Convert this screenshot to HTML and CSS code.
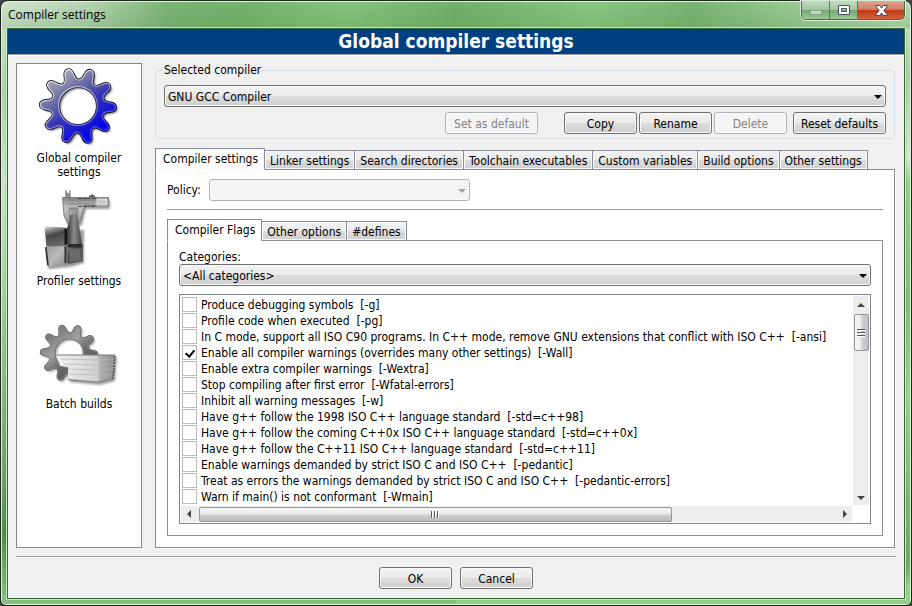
FILE: index.html
```html
<!DOCTYPE html>
<html lang="en">
<head>
<meta charset="utf-8">
<title>Compiler settings</title>
<link rel="stylesheet" href="styles.css">
</head>
<body>
<div class="window">
  <header class="titlebar">
    <h1 class="titlebar-text">Compiler settings</h1>
    <div class="caption-buttons">
      <button class="caption caption-min" aria-label="Minimize" disabled>
        <svg width="12" height="5" viewBox="0 0 12 5"><rect x=".5" y=".5" width="11" height="4" fill="#c5dcc2" stroke="#86a184"/></svg>
      </button>
      <button class="caption caption-max" aria-label="Maximize">
        <svg width="12" height="10" viewBox="0 0 12 10"><path fill-rule="evenodd" d="M.5.5h11v9H.5zM3.500 3.500h5v3h-5z" fill="#fff" stroke="#4b4f63"/></svg>
      </button>
      <button class="caption caption-close" aria-label="Close">
        <svg width="13" height="11" viewBox="0 0 13 11"><path d="M1 .5h3.500L6.500 3l2-2.500H12v1L9 5.500l3 4v1H8.500l-2-2.500-2 2.500H1v-1l3-4-3-4z" fill="#fff" stroke="#4b3c4e"/></svg>
      </button>
    </div>
  </header>

  <main class="client">
    <h2 class="banner">Global compiler settings</h2>

    <div class="content">
      <nav class="sidebar" aria-label="Pages">
        <button class="page">
          <svg class="page-icon" viewBox="0 0 84 84" aria-hidden="true">
            <defs>
              <path id="gear" fill-rule="evenodd" d="M25.800-7.300Q26.700-4.200 32.800-3.300Q38.900-2.400 38.800 1.400Q38.700 5.100 32.500 5.600Q26.300 6.100 25.200 9.200Q24.100 12.300 28.500 16.600Q32.900 21 30.600 23.900Q28.300 26.800 23 23.600Q17.700 20.400 15 22.300Q12.300 24.100 13.300 30.200Q14.300 36.300 10.700 37.300Q7.100 38.300 4.800 32.600Q2.400 26.900-.9 26.800Q-4.200 26.700-7 32.300Q-9.800 37.800-13.300 36.500Q-16.800 35.200-15.400 29.200Q-13.900 23.100-16.500 21.100Q-19.100 19.100-24.600 22Q-30.100 24.800-32.200 21.700Q-34.300 18.600-29.600 14.600Q-24.900 10.500-25.800 7.300Q-26.700 4.200-32.800 3.300Q-38.900 2.400-38.800-1.400Q-38.700-5.100-32.500-5.600Q-26.300-6.100-25.200-9.200Q-24.100-12.300-28.500-16.600Q-32.900-21-30.600-23.900Q-28.300-26.800-23-23.600Q-17.700-20.400-15-22.300Q-12.300-24.100-13.300-30.200Q-14.300-36.300-10.700-37.300Q-7.100-38.300-4.800-32.600Q-2.400-26.900.9-26.800Q4.200-26.700 7-32.300Q9.800-37.800 13.300-36.500Q16.800-35.200 15.400-29.200Q13.900-23.100 16.500-21.100Q19.100-19.100 24.600-22Q30.100-24.800 32.200-21.700Q34.300-18.600 29.600-14.600Q24.900-10.500 25.800-7.300ZM20 0A20 20 0 1 0-20 0A20 20 0 1 0 20 0Z"/>
              <linearGradient id="blue" gradientUnits="userSpaceOnUse" x1="-22" y1="-30" x2="14" y2="26">
                <stop offset="0" stop-color="#a3a3b4"/><stop offset=".3" stop-color="#6d6da6"/><stop offset=".6" stop-color="#3434b4"/><stop offset="1" stop-color="#0808e4"/>
              </linearGradient>
              <linearGradient id="rim" gradientUnits="userSpaceOnUse" x1="-22" y1="-30" x2="22" y2="30">
                <stop offset="0" stop-color="#f2f2f4"/><stop offset=".5" stop-color="#9a9ad8"/><stop offset="1" stop-color="#3c3cf2"/>
              </linearGradient>
              <linearGradient id="steel" gradientUnits="userSpaceOnUse" x1="-22" y1="-30" x2="22" y2="30">
                <stop offset="0" stop-color="#767676"/><stop offset=".35" stop-color="#a0a0a0"/><stop offset=".6" stop-color="#6c6c6c"/><stop offset="1" stop-color="#515151"/>
              </linearGradient>
              <filter id="soft" x="-20%" y="-20%" width="140%" height="140%"><feGaussianBlur stdDeviation="1.300"/></filter>
            </defs>
            <use href="#gear" transform="translate(43 41) scale(.97)" fill="#000" opacity=".6" filter="url(#soft)"/>
            <g transform="translate(41 39) scale(.97)">
              <use href="#gear" fill="none" stroke="#16161c" stroke-width="3"/>
              <use href="#gear" fill="url(#blue)" stroke="url(#rim)" stroke-width="1.200"/>
            </g>
          </svg>
          <span>Global compiler settings</span>
        </button>

        <button class="page">
          <svg class="page-icon" viewBox="0 0 84 84" aria-hidden="true">
            <defs>
              <linearGradient id="cube-a" x1="0" y1="0" x2=".3" y2="1"><stop offset="0" stop-color="#e4e4e4"/><stop offset=".25" stop-color="#8a8a8a"/><stop offset=".5" stop-color="#484848"/><stop offset="1" stop-color="#666"/></linearGradient>
              <linearGradient id="cube-b" x1="0" y1="0" x2="1" y2="1"><stop offset="0" stop-color="#989898"/><stop offset=".5" stop-color="#bababa"/><stop offset="1" stop-color="#8c8c8c"/></linearGradient>
              <linearGradient id="cube-c" x1="0" y1="0" x2="1" y2="1"><stop offset="0" stop-color="#8a8a8a"/><stop offset=".35" stop-color="#4c4c4c"/><stop offset="1" stop-color="#666"/></linearGradient>
              <linearGradient id="cone"><stop offset="0" stop-color="#2a2a2a"/><stop offset=".5" stop-color="#8a8a8a"/><stop offset="1" stop-color="#444"/></linearGradient>
              <linearGradient id="bar" x1="0" y1="0" x2="0" y2="1"><stop offset="0" stop-color="#858585"/><stop offset=".4" stop-color="#c4c4c4"/><stop offset="1" stop-color="#8a8a8a"/></linearGradient>
            </defs>
            <g transform="translate(2 -2)">
              <path d="M8 42h37v33l-14 4-22 2zM26 12h45v9H47l-4 16-6 3z" fill="#000" opacity=".4" filter="url(#soft)"/>
              <path d="M26.500 2l2 3 1.500 1 1-4 .5 9h-5z" fill="#909090" stroke="#777" stroke-width=".5"/>
              <path d="M50 9.500v-2h2v-1h2v1h2v2z" fill="#555"/>
              <path d="M23.500 9.500h46v8h-24l-3.500 13-4 6.500-2-1 2-9 1-7h-9l.5 8 2 8-3 1-4.500-9z" fill="url(#bar)" stroke="#707070" stroke-width=".8"/>
              <path d="M29 12h26M29 16h26" stroke="#777" stroke-width=".7"/>
              <path d="M39 10.500h12M53 10.500h5M39 18.500h11M52 18.500h4" stroke="#444" stroke-width="1.200" stroke-dasharray="4 1"/>
              <path d="M58 11h10v6H58z" fill="#c9c9c9" stroke="#eee" stroke-width=".8"/>
              <path d="M31 27q3-2 7 0l1.500 7L43 56H27V42l3-7z" fill="url(#cone)"/>
              <path d="M5.500 40l2-1.500 18 1 1.500 1-1.500 17-18 1z" fill="url(#cube-a)"/>
              <path d="M25.500 40l2.500 1v15.500l-2.500 1z" fill="#151515"/>
              <path d="M7 59l18.500-.5 1 17-17.500 3z" fill="url(#cube-b)"/>
              <path d="M6 59.500l1.500-1L10 78l-2-1zM25.500 58.500h2v16l-2 1z" fill="#303030"/>
              <path d="M28 58l2-1.500 12.500 1 1.500 1.500v14.500L28.500 76z" fill="url(#cube-c)"/>
              <path d="M27.500 58l2-2H43l1 2-2 1.500H30z" fill="#2c2c2c"/>
              <path d="M30.500 61l10.500-.5v11.500l-10 2z" fill="#6a6a6a"/>
            </g>
          </svg>
          <span>Profiler settings</span>
        </button>

        <button class="page">
          <svg class="page-icon" viewBox="0 0 84 84" aria-hidden="true">
            <defs>
              <linearGradient id="paper"><stop offset="0" stop-color="#f2f2f2"/><stop offset=".7" stop-color="#cfcfcf"/><stop offset=".74" stop-color="#b0b0b0"/><stop offset="1" stop-color="#8c8c8c"/></linearGradient>
            </defs>
            <g filter="url(#soft)" opacity=".4">
              <use href="#gear" transform="translate(34 42) scale(.73)"/>
              <path d="M24 44h56l-2 24-15 4-30-3z"/>
            </g>
            <g transform="translate(32 40) scale(.73)">
              <use href="#gear" fill="none" stroke="#4c4c4c" stroke-width="2.500"/>
              <use href="#gear" fill="url(#steel)" stroke="#999" stroke-width="1"/>
            </g>
            <path d="M20 42h58l-2 24-15 3L31 66.500V54l-8-1z" fill="url(#paper)"/>
            <path d="M20 42h58" stroke="#7a7a7a"/>
            <path d="M24 46l37 1 16-1M27 51l34 1 16-1M31 56l30 1 15-1M31 61l30 1 15-1" fill="none" stroke="#b4b4b4" stroke-width=".7"/>
            <path d="M31 66.500L61 69l15-3" fill="none" stroke="#777" stroke-width=".8"/>
            <path d="M78 43L76 66" stroke="#555" stroke-width="1.500" stroke-dasharray="2 1"/>
          </svg>
          <span>Batch builds</span>
        </button>
      </nav>

      <div class="main">
        <fieldset class="group">
          <legend>Selected compiler</legend>
          <div class="combo">
            <select aria-label="Selected compiler"><option>GNU GCC Compiler</option></select>
          </div>
          <div class="group-buttons">
            <button class="btn wide push" disabled>Set as default</button>
            <button class="btn">Copy</button>
            <button class="btn">Rename</button>
            <button class="btn" disabled>Delete</button>
            <button class="btn wide reset">Reset defaults</button>
          </div>
        </fieldset>

        <div class="notebook">
          <div class="tabs" role="tablist">
            <button class="tab active" role="tab" aria-selected="true">Compiler settings</button>
            <button class="tab" role="tab">Linker settings</button>
            <button class="tab" role="tab">Search directories</button>
            <button class="tab" role="tab">Toolchain executables</button>
            <button class="tab" role="tab">Custom variables</button>
            <button class="tab" role="tab">Build options</button>
            <button class="tab" role="tab">Other settings</button>
          </div>
          <section class="panel">
            <div class="policy">
              <label for="policy">Policy:</label>
              <div class="combo combo-policy">
                <select id="policy" disabled></select>
              </div>
            </div>
            <hr class="rule">

            <div class="notebook inner">
              <div class="tabs" role="tablist">
                <button class="tab active" role="tab" aria-selected="true">Compiler Flags</button>
                <button class="tab" role="tab">Other options</button>
                <button class="tab" role="tab">#defines</button>
              </div>
              <section class="panel">
                <label class="categories" for="categories">Categories:</label>
                <div class="combo">
                  <select id="categories"><option>&lt;All categories&gt;</option></select>
                </div>
                <div class="flags">
                  <div class="flag-list">
                    <label><input type="checkbox">Produce debugging symbols  [-g]</label>
                    <label><input type="checkbox">Profile code when executed  [-pg]</label>
                    <label><input type="checkbox">In C mode, support all ISO C90 programs. In C++ mode, remove GNU extensions that conflict with ISO C++  [-ansi]</label>
                    <label><input type="checkbox" checked>Enable all compiler warnings (overrides many other settings)  [-Wall]</label>
                    <label><input type="checkbox">Enable extra compiler warnings  [-Wextra]</label>
                    <label><input type="checkbox">Stop compiling after first error  [-Wfatal-errors]</label>
                    <label><input type="checkbox">Inhibit all warning messages  [-w]</label>
                    <label><input type="checkbox">Have g++ follow the 1998 ISO C++ language standard  [-std=c++98]</label>
                    <label><input type="checkbox">Have g++ follow the coming C++0x ISO C++ language standard  [-std=c++0x]</label>
                    <label><input type="checkbox">Have g++ follow the C++11 ISO C++ language standard  [-std=c++11]</label>
                    <label><input type="checkbox">Enable warnings demanded by strict ISO C and ISO C++  [-pedantic]</label>
                    <label><input type="checkbox">Treat as errors the warnings demanded by strict ISO C and ISO C++  [-pedantic-errors]</label>
                    <label><input type="checkbox">Warn if main() is not conformant  [-Wmain]</label>
                  </div>
                  <div class="vbar" aria-hidden="true">
                    <i class="arrow up"></i>
                    <div class="vthumb"><i></i><i></i><i></i></div>
                    <i class="arrow down"></i>
                  </div>
                  <div class="hbar" aria-hidden="true">
                    <i class="arrow left"></i>
                    <div class="htrack"><div class="hthumb"><i></i><i></i><i></i></div></div>
                    <i class="arrow right"></i>
                  </div>
                </div>
              </section>
            </div>
          </section>
        </div>
      </div>
    </div>

    <footer class="footer">
      <button class="btn">OK</button>
      <button class="btn">Cancel</button>
    </footer>
  </main>
</div>
</body>
</html>
```
FILE: styles.css
```css
* {
  box-sizing: border-box;
}

body {
  margin: 0;
  background: #444;
  color: #000;
  font: 12px/14px "DejaVu Sans Condensed", "DejaVu Sans", sans-serif;
}

button,
select,
input {
  margin: 0;
  font: inherit;
  color: inherit;
}

.window {
  display: flex;
  flex-direction: column;
  height: 100vh;
  padding: 0 6px 6px;
  border: 1px solid #1c241c;
  border-radius: 8px 8px 6px 6px;
  background:
    linear-gradient(transparent, rgb(80 140 75 / 25%)) top / 100% 28px no-repeat,
    linear-gradient(90deg, #d5e6d2, #b5d4b1 10%, #7db577 18%, #74b26d 26%, #86c47f 38%, #73b06c 50%, #8bc884 65%, #7ab474 76%, #9ccd96 88%, #b5dab0) top / 100% 28px no-repeat,
    linear-gradient(#d2e6cf, #a9d1a4 15%, #c8e4c4 30%, #a6d49f 45%, #6b9d66 80%, #4f8a49 88%, #86c77e) left / 50% 100% no-repeat,
    linear-gradient(#cfe8ca, #a2cf9c 12%, #cfe8ca 26%, #8fd185 30%, #7dbf74 50%, #92d488 65%, #6ba763 93%, #8fd185 97%) right / 50% 100% no-repeat;
  box-shadow: inset 0 0 0 1px #e4f3e2;
}

.titlebar {
  display: flex;
  justify-content: space-between;
  height: 27px;
}

.titlebar-text {
  margin: 0;
  padding: 5px 1px;
  font: 12px/18px "Open Sans", "Noto Sans", sans-serif;
}

.caption-buttons {
  display: flex;
  height: 19px;
  border: 1px solid #4e6b4c;
  border-top: 0;
  border-radius: 0 0 5px 5px;
  box-shadow: 0 0 0 1px #d7ecd4;
  overflow: hidden;
}

.caption {
  display: flex;
  align-items: center;
  justify-content: center;
  width: 28px;
  padding: 0;
  border: 0;
  border-right: 1px solid #5b7559;
  background: linear-gradient(#c3dcc0, #a3c69f 48%, #78a873 52%, #9ac795);
}

.caption-min {
  align-items: flex-end;
  padding-bottom: 4px;
}

.caption-close {
  width: 46px;
  border-right: 0;
  background: linear-gradient(#e2a795, #cf7a62 48%, #bb3a17 52%, #d4623e);
}

.client {
  display: flex;
  flex: 1;
  flex-direction: column;
  min-height: 0;
  border: 1px solid #3d6339;
  outline: 1px solid #c6e5c2;
  background: #f0f0f0;
}

.banner {
  margin: 0;
  border-bottom: 1px solid #a0a0a0;
  background: #004080;
  box-shadow: 0 1px #fff;
  color: #fff;
  font-size: 19px;
  font-weight: bold;
  line-height: 25px;
  text-align: center;
}

.content {
  display: flex;
  flex: 1;
  gap: 13px;
  min-height: 0;
  padding: 8px 9px 0 8px;
}

.sidebar {
  display: flex;
  flex: none;
  flex-direction: column;
  gap: 11px;
  width: 126px;
  padding-top: 3px;
  border: 1px solid #828790;
  background: #fff;
}

.page {
  display: flex;
  flex-direction: column;
  align-items: center;
  min-height: 112px;
  padding: 0 16px;
  border: 0;
  background: none;
  text-align: center;
}

.page-icon {
  flex: none;
  width: 84px;
  height: 84px;
}

.main {
  display: flex;
  flex: 1;
  flex-direction: column;
  gap: 9px;
  min-width: 0;
}

.group {
  min-width: 0;
  margin: 0;
  padding: 8px 8px 4px;
  border: 1px solid #d5dfe5;
  border-radius: 4px;
}

.group legend {
  padding: 0;
}

.group-buttons {
  display: flex;
  gap: 2px;
  margin-top: 5px;
}

.combo {
  position: relative;
}

.combo select {
  display: block;
  width: 100%;
  height: 22px;
  padding: 1px 20px 0 3px;
  border: 1px solid #707070;
  border-radius: 3px;
  appearance: none;
  background: linear-gradient(#f2f2f2, #ebebeb 50%, #ddd 50%, #cfcfcf);
  box-shadow: inset 0 0 0 1px #fafafa;
}

.combo::after {
  content: "";
  position: absolute;
  top: 10px;
  right: 4px;
  border: 4px solid transparent;
  border-top-color: #000;
  border-bottom: 0;
  pointer-events: none;
}

.combo select:disabled {
  border-color: #adb2b5;
  background: #f4f4f4;
  opacity: 1;
}

.combo:has(select:disabled)::after {
  border-top-color: #a0a0a0;
}

.btn {
  width: 73px;
  height: 22px;
  padding: 1px 0 0;
  border: 1px solid #707070;
  border-radius: 3px;
  background: linear-gradient(#f2f2f2, #ebebeb 50%, #ddd 50%, #cfcfcf);
  box-shadow: inset 0 0 0 1px #fafafa;
  white-space: nowrap;
}

.btn:disabled {
  border-color: #adb2b5;
  background: #f4f4f4;
  color: #838383;
}

.wide {
  width: 93px;
}

.push {
  margin: 0 24px 0 auto;
}

.reset {
  margin-left: 4px;
}

.notebook {
  display: flex;
  flex: 1;
  flex-direction: column;
  min-height: 0;
}

.tabs {
  display: flex;
  align-items: flex-end;
  height: 22px;
  margin-bottom: -1px;
}

.tab {
  height: 20px;
  padding: 1px 5px 0;
  border: 1px solid #898c95;
  border-left-width: 0;
  background: linear-gradient(#f2f2f2, #ebebeb 50%, #ddd 50%, #cfcfcf);
  box-shadow: inset 0 0 0 1px #f8f8f8;
  white-space: nowrap;
}

.tab.active {
  z-index: 1;
  height: 22px;
  padding: 0 6px 1px 7px;
  border-left-width: 1px;
  border-bottom-color: #fff;
  background: #fff;
}

.panel {
  display: flex;
  flex: 1;
  flex-direction: column;
  min-height: 0;
  padding: 9px 11px 11px;
  border: 1px solid #898c95;
  background: #fff;
}

.notebook:not(.inner) > .panel {
  box-shadow: 1px 1px #fff;
}

.policy {
  display: flex;
  align-items: center;
  gap: 8px;
}

.combo-policy {
  width: 261px;
}

.rule {
  width: 100%;
  margin: 8px 0 9px;
  border: 0;
  border-top: 1px solid #a0a0a0;
}

.categories {
  line-height: 14px;
}

.flags {
  display: grid;
  flex: 1;
  grid-template: minmax(0, 1fr) 16px / minmax(0, 1fr) 16px;
  gap: 1px;
  min-height: 0;
  margin-top: 8px;
  padding: 1px;
  border: 1px solid #828790;
  background: #fff;
}

.flag-list {
  overflow: hidden;
}

.flag-list label {
  display: flex;
  align-items: flex-end;
  gap: 4px;
  height: 16px;
  padding-left: 1px;
  white-space: pre;
}

.flag-list input {
  flex: none;
  width: 15px;
  height: 15px;
  border: 1px solid #bcbcbc;
  appearance: none;
  background: #fff;
}

.flag-list input:checked::after {
  content: "";
  display: block;
  width: 4px;
  height: 7px;
  margin: 2px 4px;
  border: solid #000;
  border-width: 0 2px 2px 0;
  transform: rotate(40deg);
}

.vbar,
.hbar {
  display: flex;
  align-items: center;
  background: #ededed;
}

.vbar {
  flex-direction: column;
  padding: 7px 0 5px;
}

.hbar {
  padding: 0 5px 0 6px;
}

.arrow {
  flex: none;
  border: 4px solid transparent;
}

.up {
  border-top: 0;
  border-bottom-color: #444;
}

.down {
  margin-top: auto;
  border-bottom: 0;
  border-top-color: #444;
}

.left {
  border-left: 0;
  border-right-color: #444;
}

.right {
  border-right: 0;
  border-left-color: #444;
}

.vthumb,
.hthumb {
  display: flex;
  align-items: center;
  justify-content: center;
  gap: 1px;
  border: 1px solid #979797;
  border-radius: 2px;
}

.vthumb {
  flex-direction: column;
  width: 15px;
  height: 37px;
  margin-top: 7px;
  background: linear-gradient(90deg, #f5f5f5, #e9e9eb 48%, #d0d0d4 52%, #c2c2c6);
}

.hthumb {
  width: 74%;
  height: 15px;
  background: linear-gradient(#f5f5f5, #e9e9eb 48%, #d0d0d4 52%, #bcbcbf);
}

.vthumb i {
  width: 8px;
  height: 2px;
  background: linear-gradient(#5c5c5c 50%, #fff 50%);
}

.hthumb i {
  width: 2px;
  height: 7px;
  background: linear-gradient(90deg, #5c5c5c 50%, #fff 50%);
}

.htrack {
  flex: 1;
  margin: 0 5px 0 8px;
}

.footer {
  display: flex;
  flex: none;
  justify-content: center;
  gap: 8px;
  margin: 8px 8px 0;
  padding: 10px 0 9px;
  border-top: 1px solid #a0a0a0;
  box-shadow: inset 0 1px #fff;
}
```
